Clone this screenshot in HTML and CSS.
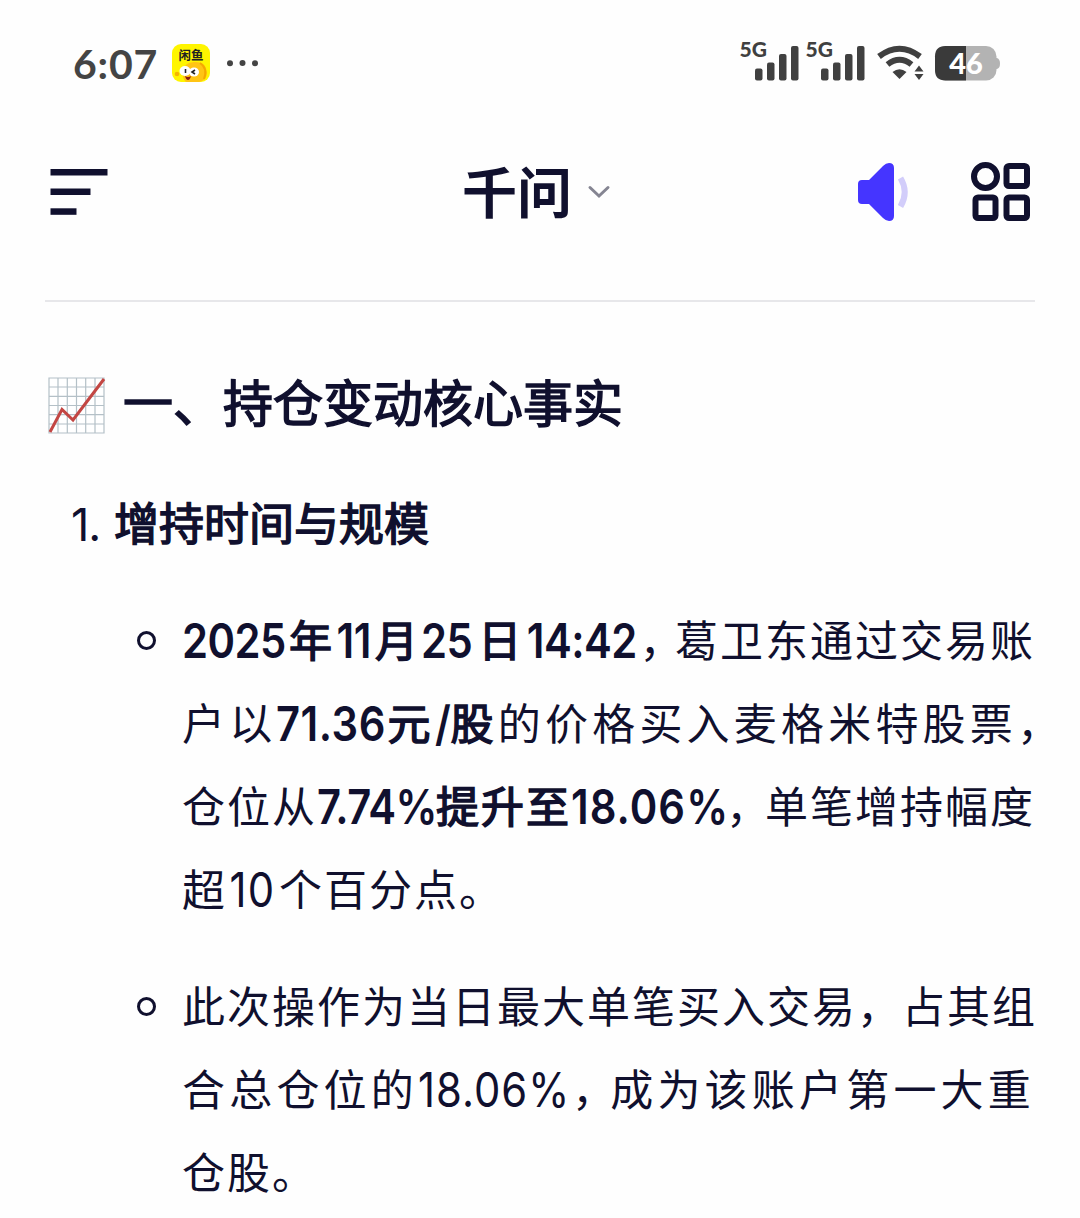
FILE: index.html
```html
<!DOCTYPE html>
<html lang="zh-CN">
<head>
    <meta charset="UTF-8">
    <meta name="viewport" content="width=device-width, initial-scale=1.0">
    <title>千问</title>
    <link rel="stylesheet" href="styles.css">
</head>
<body>

    <div class="statusbar">
        <span class="clock">6:07</span>
        <svg class="app-badge" width="38" height="38" viewBox="0 0 38 38">
            <rect width="38" height="38" rx="9" fill="#fff500"/>
            <path d="M11 28Q12 18 22 18Q34 17 35 29Q35 36 27 38H14Q10 34 11 28Z" fill="#ffc414"/>
            <path d="M28 19Q36 24 32 35" stroke="#f5a800" stroke-width="2" fill="none"/>
            <circle cx="5" cy="30" r="2.3" fill="#f5b400"/>
            <ellipse cx="13" cy="27" rx="5.5" ry="5" fill="#fff"/>
            <ellipse cx="22" cy="28" rx="5" ry="4.5" fill="#fff"/>
            <path d="M13.500 25v4M23 26l-3 2 3 2" stroke="#222" stroke-width="1.600" fill="none"/>
            <path d="M13 32q3 2 6 0q-1 4-3 4t-3-4z" fill="#8c1c12"/>
            <text class="badge-text" x="19" y="16" text-anchor="middle">闲鱼</text>
        </svg>
        <svg class="more" width="34" height="8" viewBox="0 0 34 8" fill="#444">
            <circle cx="4" cy="4.300" r="3"/><circle cx="16.500" cy="4" r="3"/><circle cx="29" cy="4.300" r="3"/>
        </svg>
        <div class="status-right">
            <svg class="signal" width="60" height="44" viewBox="0 0 60 44" fill="#404040">
                <text class="net" x="0.500" y="18">5G</text>
                <rect x="16" y="29.500" width="7.500" height="12" rx="2"/>
                <rect x="28" y="23.500" width="7.500" height="18" rx="2"/>
                <rect x="40" y="15" width="7.500" height="26.500" rx="2"/>
                <rect x="52" y="7" width="7.500" height="34.500" rx="2"/>
            </svg>
            <svg class="signal" width="60" height="44" viewBox="0 0 60 44" fill="#404040">
                <text class="net" x="0.500" y="18">5G</text>
                <rect x="16" y="29.500" width="7.500" height="12" rx="2"/>
                <rect x="28" y="23.500" width="7.500" height="18" rx="2"/>
                <rect x="40" y="15" width="7.500" height="26.500" rx="2"/>
                <rect x="52" y="7" width="7.500" height="34.500" rx="2"/>
            </svg>
            <svg class="wifi" width="47" height="34" viewBox="0 0 47 34">
                <path d="M2 10.500Q22.500-5 43 10.500M10.500 18.500Q22.500 9 34.500 18.500" stroke="#404040" stroke-width="6" fill="none"/>
                <path d="M15.500 26Q22.500 20.500 29.500 26L22.500 33Z" fill="#404040"/>
                <path d="M37.500 25.500L42 19.500L46.500 25.500ZM37.500 28H46.500L42 34Z" fill="#404040"/>
            </svg>
            <svg class="battery" width="65" height="35" viewBox="0 0 65 35">
                <path d="M60 12h2q3 1 3 5.500t-3 5.500h-2z" fill="#b3b3b3"/>
                <rect width="61.500" height="34.500" rx="10.500" fill="#b3b3b3"/>
                <path d="M31 0H10.500Q0 0 0 10.500V24Q0 34.500 10.500 34.500H31Z" fill="#3a3a3a"/>
                <text class="battery-text" x="31" y="27.500" text-anchor="middle">46</text>
            </svg>
        </div>
    </div>

    <header>
        <svg class="menu" width="58" height="48" viewBox="0 0 58 48" fill="#10102e">
            <rect x="0.500" y="1" width="57" height="6.500"/>
            <rect x="0.500" y="20.500" width="40" height="6.500"/>
            <rect x="0.500" y="40.300" width="26" height="6.500"/>
        </svg>
        <div class="title">
            <h1>千问</h1>
            <svg width="22" height="14" viewBox="0 0 22 14">
                <path d="M2 2.500L11 11L20 2.500" stroke="#858592" stroke-width="3" fill="none" stroke-linecap="round"/>
            </svg>
        </div>
        <div class="tools">
            <svg width="52" height="60" viewBox="0 0 52 60">
                <path d="M5 18H12L26 4Q29 1 32 1Q37 1 37 6V54Q37 59 32 59Q29 59 26 56L12 42H5Q1 42 1 38V22Q1 18 5 18Z" fill="#4535ff"/>
                <path d="M43.500 16Q52 30 43.500 44.500" stroke="#d2cdfa" stroke-width="6" fill="none"/>
            </svg>
            <svg width="60" height="60" viewBox="0 0 60 60" fill="none" stroke="#10102e" stroke-width="6">
                <circle cx="14.500" cy="14.500" r="11.500"/>
                <rect x="35.500" y="4" width="20.500" height="20" rx="2.500"/>
                <rect x="4.500" y="35.500" width="20" height="20.500" rx="2.500"/>
                <rect x="35.500" y="35.500" width="20.500" height="20.500" rx="2.500"/>
            </svg>
        </div>
    </header>

    <main>
        <h2>
            <svg width="57" height="57" viewBox="0 0 57 57">
                <path d="M1 1H56V56H1ZM10 1V56M19.300 1V56M28.500 1V56M37.700 1V56M47 1V56M1 10H56M1 19.300H56M1 28.500H56M1 37.700H56M1 47H56" stroke="#b4c0c7" stroke-width="1.200" fill="#fff"/>
                <path d="M2 55L14 32.500L25 43L56 2" stroke="#c34643" stroke-width="3" fill="none"/>
            </svg>
            <span>一、持仓变动核心事实</span>
        </h2>

        <h3><span class="index">1.</span><span class="strong">增持时间与规模</span></h3>

        <ul>
            <li>
                <p class="line"><b class="num year">2025</b><b>年</b><b class="num month">11</b><b class="cell">月</b><b class="num day">25</b><b class="cell">日</b><b class="num time">14:42</b><span class="comma">，</span>葛卫东通过交易账</p>
                <p class="line wide"><span>户以</span><b class="num price">71.36</b><b>元</b><b class="num slash">/</b><b>股</b><span>的价格买入麦格米特股票</span><span class="comma">，</span></p>
                <p class="line"><span>仓位从</span><b class="num before">7.74%</b><b>提升至</b><b class="num after">18.06%</b><span class="comma">，</span>单笔增持幅度</p>
                <p class="line">超<span class="num ten">10</span>个百分点。</p>
            </li>
            <li>
                <p class="line">此次操作为当日最大单笔买入交易，占其组</p>
                <p class="line wide">合总仓位的<span class="num share">18.06%</span><span class="comma">，</span>成为该账户第一大重</p>
                <p class="line">仓股。</p>
            </li>
        </ul>
    </main>

</body>
</html>
```
FILE: styles.css
```css
* {
    box-sizing: border-box;
}

body {
    margin: 0;
    background-color: #fefefe;
    color: #10102e;
    font-family: 'Lato', 'Noto Sans CJK SC', sans-serif;
}

svg {
    display: block;
    flex-shrink: 0;
    overflow: visible;
}

h1, h2, h3, p, ul {
    margin: 0;
    padding: 0;
}

.statusbar {
    display: flex;
    align-items: center;
    height: 126px;
    padding: 0 80px 0 73px;
}

.clock {
    width: 99px;
    color: #444;
    font-size: 41px;
    font-weight: 700;
    letter-spacing: 0.8px;
}

.badge-text {
    font: 700 12.5px 'Noto Sans CJK SC', sans-serif;
    fill: #222;
}

.more {
    margin-left: 16px;
}

.status-right {
    display: flex;
    align-items: center;
    margin-left: auto;
}

.signal {
    margin-right: 6px;
    margin-top: -4px;
}

.net {
    font: 900 21px 'Lato', sans-serif;
}

.wifi {
    margin-left: 6px;
    margin-right: 11px;
}

.battery-text {
    font: 900 29px 'Lato', sans-serif;
    fill: #fff;
}

header {
    display: grid;
    grid-template-columns: 1fr auto 1fr;
    align-items: center;
    height: 132px;
    padding: 0 49px 0 50px;
}

.title {
    display: flex;
    align-items: center;
    gap: 16px;
    margin-left: -9px;
}

h1 {
    padding-bottom: 7px;
    font: 700 55px/80px 'Noto Sans CJK SC', sans-serif;
}

.tools {
    display: flex;
    justify-content: flex-end;
    gap: 62px;
}

main {
    margin: 42px 45px 0;
    border-top: 2px solid #e7e7ea;
    padding-top: 63px;
}

h2 {
    display: flex;
    align-items: center;
    gap: 18px;
    height: 80px;
    padding-left: 3px;
    font: 400 50px/80px 'Noto Sans CJK SC', sans-serif;
    -webkit-text-stroke: 1.5px;
}

h2 span {
    padding-bottom: 10px;
}

h3 {
    display: flex;
    align-items: center;
    height: 80px;
    margin-top: 37px;
    padding-left: 26px;
    font: 400 45px/80px 'Noto Sans CJK SC', sans-serif;
}

.strong, .line b {
    font-weight: 400;
    -webkit-text-stroke: 1.5px;
}

.index {
    width: 43px;
    padding-top: 5px;
    font-family: 'Inter', sans-serif;
    font-weight: 400;
    letter-spacing: -1px;
}

ul {
    list-style: none;
    margin-top: 35px;
    padding-left: 137px;
}

li {
    position: relative;
    margin-bottom: 34px;
}

li::before {
    content: "";
    position: absolute;
    left: -45px;
    top: 34px;
    box-sizing: border-box;
    width: 19px;
    height: 19px;
    border: 3px solid #10102e;
    border-radius: 50%;
}

.line {
    display: flex;
    height: 83px;
    font-family: 'Noto Sans CJK SC', sans-serif;
    font-size: 43px;
    line-height: 82px;
    letter-spacing: 2px;
    white-space: nowrap;
}

.wide {
    letter-spacing: 4.2px;
}

/* digits are drawn narrower than Inter sets them */
.line .num {
    flex-shrink: 0;
    font-family: 'Inter', sans-serif;
    font-size: 48px;
    line-height: 88px;
    letter-spacing: -0.6px;
    transform: scaleX(0.87);
    transform-origin: left;
}

.line b.num {
    font-weight: 600;
    -webkit-text-stroke: 0;
}

.line .cell {
    width: 47px;
}

.line .month, .line .ten {
    padding-left: 3px;
}

.line .time {
    padding-left: 2px;
}

.line .price {
    letter-spacing: 0.6px;
}

.line .after, .line .share, .line .ten {
    letter-spacing: 1.2px;
}

.year { width: 107px; }
.month { width: 41px; }
.day { width: 57px; }
.time { width: 115px; }
.price { width: 111px; }
.slash { width: 16px; }
.before { width: 119px; }
.after { width: 155px; }
.ten { width: 52px; }
.share { width: 154px; }

/* half-width glyph, so the mark does not run under the next character */
.comma {
    width: 36px;
    font-feature-settings: "halt";
}

.after + .comma,
.share + .comma {
    width: 40px;
}
```
